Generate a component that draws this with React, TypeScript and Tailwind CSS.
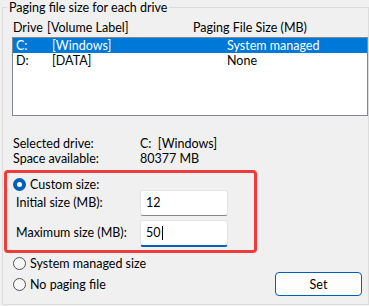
export default function App() {
    return (
        <div
            className="w-[369px] h-[306px] bg-[#f0f0f0] pt-[7px] pl-[2px] text-[12.5px] text-black overflow-hidden"
            style={{ fontFamily: 'Lato, "Noto Sans", sans-serif' }}
        >
            {/* Group box */}
            <div className="relative w-[367px] h-[298px] border border-[#dcdcdc]">
                <div className="absolute top-[-8px] left-[4px] px-[2px] bg-[#f0f0f0] leading-[15px]">
                    Paging file size for each drive
                </div>

                {/* Column headers */}
                <div className="flex items-end h-[29px] pb-[2px] pl-[10px] leading-[15px]">
                    <span className="w-[34px]">Drive</span>
                    <span className="w-[146px]">[Volume Label]</span>
                    <span>Paging File Size (MB)</span>
                </div>

                {/* Drive list */}
                <div className="ml-[9px] w-[356px] h-[79px] border border-[#828790] bg-white leading-[15px]">
                    <div className="flex h-[15px] pl-[3px] bg-[#0078d7] text-white">
                        <span className="w-[36px]">C:</span>
                        <span className="w-[175px]">[Windows]</span>
                        <span>System managed</span>
                    </div>
                    <div className="flex h-[15px] pl-[3px]">
                        <span className="w-[36px]">D:</span>
                        <span className="w-[175px]">[DATA]</span>
                        <span>None</span>
                    </div>
                </div>

                {/* Selected drive info */}
                <div className="mt-[20px] pl-[10px] leading-[15px]">
                    <div className="flex">
                        <span className="w-[127px]">Selected drive:</span>
                        <span>C:&nbsp;&nbsp;[Windows]</span>
                    </div>
                    <div className="flex">
                        <span className="w-[127px]">Space available:</span>
                        <span>80377 MB</span>
                    </div>
                </div>

                {/* Highlighted custom size block */}
                <div className="mt-[4px] ml-[1px] w-[253px] h-[83px] border-[3px] border-[#ee3b3b] rounded-[4px] pt-[6px]">
                    <div className="flex items-center h-[11px] pl-[6px]">
                        <span className="flex items-center justify-center w-[13px] h-[13px] rounded-full bg-[#005fb8]">
                            <span className="w-[5px] h-[5px] rounded-full bg-white" />
                        </span>
                        <span className="ml-[4px] leading-[15px]">Custom size:</span>
                    </div>
                    <div className="flex items-center h-[26px] pl-[9px]">
                        <span className="w-[124px]">Initial size (MB):</span>
                        <div className="w-[88px] h-[26px] bg-white border border-[#e5e5e5] border-b-[#868686] rounded-[3px] pl-[5px] flex items-center">
                            12
                        </div>
                    </div>
                    <div className="flex items-center h-[27px] mt-[4px] pl-[9px]">
                        <span className="w-[124px]">Maximum size (MB):</span>
                        <div className="w-[88px] h-[27px] bg-white border border-[#e5e5e5] border-b-2 border-b-[#005fb8] rounded-[3px] pl-[5px] flex items-center">
                            50<span className="w-px h-[14px] bg-black ml-[1px]" />
                        </div>
                    </div>
                </div>

                {/* Other options */}
                <div className="flex items-center h-[15px] mt-[3px] pl-[10px]">
                    <span className="w-[13px] h-[13px] rounded-full border border-[#505050] bg-[#f7f7f7]" />
                    <span className="ml-[4px] leading-[15px]">System managed size</span>
                </div>
                <div className="flex items-center h-[24px] mt-[1px] pl-[10px] pr-[6px]">
                    <span className="w-[13px] h-[13px] rounded-full border border-[#505050] bg-[#f7f7f7]" />
                    <span className="ml-[4px] leading-[15px]">No paging file</span>
                    <button className="ml-auto w-[87px] h-[24px] border border-[#005fb8] rounded-[4px] bg-[#fdfdfd] leading-[15px]">
                        Set
                    </button>
                </div>
            </div>
        </div>
    );
}
